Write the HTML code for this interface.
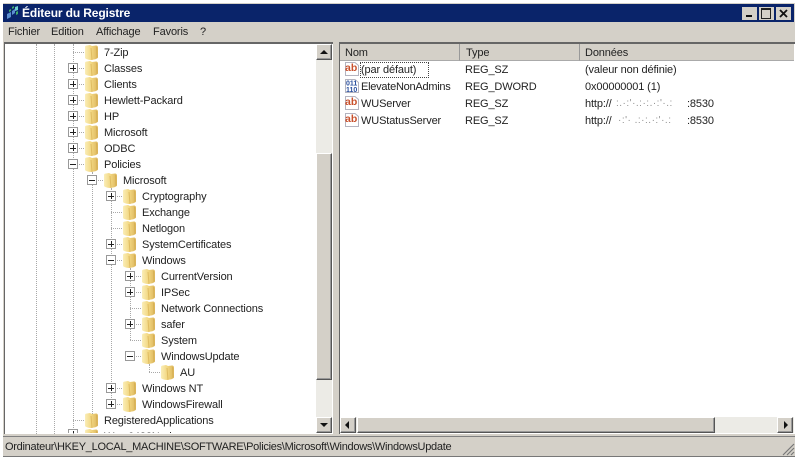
<!DOCTYPE html>
<html lang="fr"><head><meta charset="utf-8"><title>Éditeur du Registre</title>
<style>
html,body{margin:0;padding:0;background:#fff}
#w{position:relative;width:798px;height:461px;overflow:hidden;background:#fff;font:11px/16px "Liberation Sans",sans-serif;color:#222;filter:blur(.35px)}
#w div,#w span.a,#w svg.a{position:absolute}
.t{white-space:nowrap;height:16px;letter-spacing:-.13px}
.r{margin-top:1px}
.f{width:15px;height:17px}
.p{width:8px;height:8px;border:1px solid #999;background:#fff}
.p:before{content:"";position:absolute;left:1px;top:3px;width:6px;height:1px;background:#222;margin-top:.5px}
.p.x:after{content:"";position:absolute;left:3px;top:1px;width:1px;height:6px;background:#222;margin-left:.5px}
.v{width:0;border-left:1px dotted #a8a8a8}
.h{height:0;border-top:1px dotted #a8a8a8}
.b{background:#d4d0c8;box-sizing:border-box;border:1px solid;border-color:#fff #555 #555 #fff;box-shadow:inset -1px -1px 0 #999}
.i{width:16px;height:16px}
</style></head><body><div id="w">
<svg width="0" height="0" style="position:absolute"><defs>
<linearGradient id="g" x1="0" x2="1" y1="0" y2="0"><stop offset="0" stop-color="#faeeb8"/><stop offset=".5" stop-color="#f2d680"/><stop offset="1" stop-color="#dcb65c"/></linearGradient>
<symbol id="fo" viewBox="0 0 15 17"><path d="M1 3 Q1 1.500 3 1.500 L6 1 L8 2 L12 1.500 Q14 1.500 14 4 L14 13.500 Q13 15 10 15.500 L7 16 Q2 15.500 1 14 Z" fill="url(#g)"/><path d="M7 4 L8 16 M12.500 3 L13 14" stroke="#d0a548" stroke-width="1" opacity=".55" fill="none"/></symbol>
<symbol id="ab" viewBox="0 0 16 16"><path d="M1.500 1.500H11L14.500 4.500V14.500H1.500Z" fill="#fff" stroke="#b4b4c0"/><text x="1" y="10" font-family="Liberation Sans" font-size="10.500" font-weight="700" fill="#c8502c">ab</text></symbol>
<symbol id="bi" viewBox="0 0 16 16"><path d="M1.500 1.500H11L14.500 4.500V14.500H1.500Z" fill="#fff" stroke="#b4b4c0"/><text x="2" y="7.500" font-family="Liberation Sans" font-size="7" font-weight="700" fill="#2a4f9e">011</text><text x="2" y="14" font-family="Liberation Sans" font-size="7" font-weight="700" fill="#2a4f9e">110</text></symbol>
</defs></svg>

<!-- window frame -->
<div style="left:3px;top:3px;width:792px;height:453px;background:#d4d0c8;border-bottom:1px solid #777"></div>
<div style="left:3px;top:4px;width:791px;height:18px;background:#0a246a"></div>
<svg class="a" style="left:6px;top:5px" width="14" height="15" viewBox="0 0 14 15"><path d="M1 9l4-2v5l-4 2zM6 6l3-2v4l-3 2z" fill="#5b8fd0"/><path d="M9 2l3-1v4l-3 1z" fill="#6fd0d0"/><path d="M3 5l2-1v2l-2 1zM6 2l2-1v2l-2 1zM10 7l2-1v3l-2 1z" fill="#3fae6a"/></svg>
<div class="t" style="left:22px;top:5px;color:#fff;font-weight:700;font-size:12px">Éditeur du Registre</div>
<div style="left:742px;top:7px;width:15px;height:13px;background:#d4d0c8"><div style="left:4px;top:8px;width:6px;height:2px;background:#111"></div></div>
<div style="left:759px;top:7px;width:15px;height:13px;background:#d4d0c8"><div style="left:2px;top:1px;width:8px;height:8px;border:1px solid #222;border-top-width:2px"></div></div>
<div style="left:776px;top:7px;width:15px;height:13px;background:#d4d0c8"><svg class="a" style="left:3px;top:2px" width="9" height="9"><path d="M1 1L8 8M8 1L1 8" stroke="#111" stroke-width="1.800"/></svg></div>

<!-- menu -->
<div class="t" style="left:8px;top:24px">Fichier</div>
<div class="t" style="left:51px;top:24px">Edition</div>
<div class="t" style="left:96px;top:24px">Affichage</div>
<div class="t" style="left:153px;top:24px">Favoris</div>
<div class="t" style="left:200px;top:24px">?</div>

<!-- tree pane -->
<div style="left:4px;top:42px;width:329px;height:392px;background:#fff;border-top:2px solid #666;border-left:1px solid #666;box-sizing:border-box;overflow:hidden">
<div style="left:0;top:0;width:324px;height:390px;overflow:hidden" id="tree">
<div class="v" style="left:31px;top:0;height:390px"></div>
<div class="v" style="left:49px;top:0;height:390px"></div>
<div class="v" style="left:68px;top:0;height:390px"></div>
<div class="v" style="left:87px;top:128px;height:250px"></div>
<div class="v" style="left:106px;top:144px;height:216px"></div>
<div class="v" style="left:125px;top:224px;height:72px"></div>
<div class="v" style="left:144px;top:320px;height:8px"></div>
</div>
</div>

<!-- tree rows -->
<div class="h" style="left:73px;top:52px;width:11px"></div><svg class="a f" style="left:84px;top:44px"><use href="#fo"/></svg><div class="t r" style="left:104px;top:44px">7-Zip</div>
<div class="h" style="left:73px;top:68px;width:11px"></div><div class="p x" style="left:68px;top:63px"></div><svg class="a f" style="left:84px;top:60px"><use href="#fo"/></svg><div class="t r" style="left:104px;top:60px">Classes</div>
<div class="h" style="left:73px;top:84px;width:11px"></div><div class="p x" style="left:68px;top:79px"></div><svg class="a f" style="left:84px;top:76px"><use href="#fo"/></svg><div class="t r" style="left:104px;top:76px">Clients</div>
<div class="h" style="left:73px;top:100px;width:11px"></div><div class="p x" style="left:68px;top:95px"></div><svg class="a f" style="left:84px;top:92px"><use href="#fo"/></svg><div class="t r" style="left:104px;top:92px">Hewlett-Packard</div>
<div class="h" style="left:73px;top:116px;width:11px"></div><div class="p x" style="left:68px;top:111px"></div><svg class="a f" style="left:84px;top:108px"><use href="#fo"/></svg><div class="t r" style="left:104px;top:108px">HP</div>
<div class="h" style="left:73px;top:132px;width:11px"></div><div class="p x" style="left:68px;top:127px"></div><svg class="a f" style="left:84px;top:124px"><use href="#fo"/></svg><div class="t r" style="left:104px;top:124px">Microsoft</div>
<div class="h" style="left:73px;top:148px;width:11px"></div><div class="p x" style="left:68px;top:143px"></div><svg class="a f" style="left:84px;top:140px"><use href="#fo"/></svg><div class="t r" style="left:104px;top:140px">ODBC</div>
<div class="h" style="left:73px;top:164px;width:11px"></div><div class="p" style="left:68px;top:159px"></div><svg class="a f" style="left:84px;top:156px"><use href="#fo"/></svg><div class="t r" style="left:104px;top:156px">Policies</div>

<div class="h" style="left:92px;top:180px;width:11px"></div><div class="p" style="left:87px;top:175px"></div><svg class="a f" style="left:103px;top:172px"><use href="#fo"/></svg><div class="t r" style="left:123px;top:172px">Microsoft</div>

<div class="h" style="left:111px;top:196px;width:11px"></div><div class="p x" style="left:106px;top:191px"></div><svg class="a f" style="left:122px;top:188px"><use href="#fo"/></svg><div class="t r" style="left:142px;top:188px">Cryptography</div>
<div class="h" style="left:111px;top:212px;width:11px"></div><svg class="a f" style="left:122px;top:204px"><use href="#fo"/></svg><div class="t r" style="left:142px;top:204px">Exchange</div>
<div class="h" style="left:111px;top:228px;width:11px"></div><svg class="a f" style="left:122px;top:220px"><use href="#fo"/></svg><div class="t r" style="left:142px;top:220px">Netlogon</div>
<div class="h" style="left:111px;top:244px;width:11px"></div><div class="p x" style="left:106px;top:239px"></div><svg class="a f" style="left:122px;top:236px"><use href="#fo"/></svg><div class="t r" style="left:142px;top:236px">SystemCertificates</div>
<div class="h" style="left:111px;top:260px;width:11px"></div><div class="p" style="left:106px;top:255px"></div><svg class="a f" style="left:122px;top:252px"><use href="#fo"/></svg><div class="t r" style="left:142px;top:252px">Windows</div>

<div class="h" style="left:130px;top:276px;width:11px"></div><div class="p x" style="left:125px;top:271px"></div><svg class="a f" style="left:141px;top:268px"><use href="#fo"/></svg><div class="t r" style="left:161px;top:268px">CurrentVersion</div>
<div class="h" style="left:130px;top:292px;width:11px"></div><div class="p x" style="left:125px;top:287px"></div><svg class="a f" style="left:141px;top:284px"><use href="#fo"/></svg><div class="t r" style="left:161px;top:284px">IPSec</div>
<div class="h" style="left:130px;top:308px;width:11px"></div><svg class="a f" style="left:141px;top:300px"><use href="#fo"/></svg><div class="t r" style="left:161px;top:300px">Network Connections</div>
<div class="h" style="left:130px;top:324px;width:11px"></div><div class="p x" style="left:125px;top:319px"></div><svg class="a f" style="left:141px;top:316px"><use href="#fo"/></svg><div class="t r" style="left:161px;top:316px">safer</div>
<div class="h" style="left:130px;top:340px;width:11px"></div><svg class="a f" style="left:141px;top:332px"><use href="#fo"/></svg><div class="t r" style="left:161px;top:332px">System</div>
<div class="h" style="left:130px;top:356px;width:11px"></div><div class="p" style="left:125px;top:351px"></div><svg class="a f" style="left:141px;top:348px"><use href="#fo"/></svg><div class="t r" style="left:161px;top:348px">WindowsUpdate</div>
<div class="v" style="left:149px;top:364px;height:8px"></div><div class="h" style="left:149px;top:372px;width:11px"></div><svg class="a f" style="left:160px;top:364px"><use href="#fo"/></svg><div class="t r" style="left:180px;top:364px">AU</div>

<div class="h" style="left:111px;top:388px;width:11px"></div><div class="p x" style="left:106px;top:383px"></div><svg class="a f" style="left:122px;top:380px"><use href="#fo"/></svg><div class="t r" style="left:142px;top:380px">Windows NT</div>
<div class="h" style="left:111px;top:404px;width:11px"></div><div class="p x" style="left:106px;top:399px"></div><svg class="a f" style="left:122px;top:396px"><use href="#fo"/></svg><div class="t r" style="left:142px;top:396px">WindowsFirewall</div>
<div class="h" style="left:73px;top:420px;width:11px"></div><svg class="a f" style="left:84px;top:412px"><use href="#fo"/></svg><div class="t r" style="left:104px;top:412px">RegisteredApplications</div>
<div style="left:60px;top:429px;width:250px;height:4px;overflow:hidden"><div class="p x" style="left:8px;top:0"></div><svg class="a f" style="left:24px;top:-1px"><use href="#fo"/></svg><div class="t" style="left:44px;top:0">Wow6432Node</div></div>

<!-- tree scrollbar -->
<div style="left:316px;top:44px;width:16px;height:389px;background:#ecebe6"></div>
<div class="b" style="left:316px;top:44px;width:16px;height:16px"><div style="left:3px;top:5px;width:0;height:0;border:4px solid transparent;border-top:0;border-bottom:4px solid #111"></div></div>
<div class="b" style="left:316px;top:153px;width:16px;height:227px"></div>
<div class="b" style="left:316px;top:417px;width:16px;height:16px"><div style="left:3px;top:5px;width:0;height:0;border:4px solid transparent;border-bottom:0;border-top:4px solid #111"></div></div>

<!-- list pane -->
<div style="left:339px;top:42px;width:456px;height:392px;background:#fff;border-top:2px solid #666;border-left:1px solid #666;box-sizing:border-box"></div>
<div style="left:340px;top:44px;width:119px;height:16px;background:#d4d0c8;border-right:1px solid #999;border-bottom:1px solid #aaa"></div>
<div style="left:460px;top:44px;width:119px;height:16px;background:#d4d0c8;border-right:1px solid #999;border-bottom:1px solid #aaa"></div>
<div style="left:580px;top:44px;width:214px;height:16px;background:#d4d0c8;border-bottom:1px solid #aaa"></div>
<div class="t" style="left:345px;top:45px">Nom</div>
<div class="t" style="left:466px;top:45px">Type</div>
<div class="t" style="left:585px;top:45px">Données</div>

<svg class="a i" style="left:344px;top:61px"><use href="#ab"/></svg>
<div style="left:360px;top:62px;width:67px;height:14px;border:1px dotted #444"></div>
<div class="t" style="left:361px;top:62px">(par défaut)</div>
<div class="t" style="left:465px;top:62px">REG_SZ</div>
<div class="t" style="left:585px;top:62px">(valeur non définie)</div>

<svg class="a i" style="left:344px;top:78px"><use href="#bi"/></svg>
<div class="t" style="left:361px;top:79px;letter-spacing:-.25px">ElevateNonAdmins</div>
<div class="t" style="left:465px;top:79px">REG_DWORD</div>
<div class="t" style="left:585px;top:79px">0x00000001 (1)</div>

<svg class="a i" style="left:344px;top:95px"><use href="#ab"/></svg>
<div class="t" style="left:361px;top:96px">WUServer</div>
<div class="t" style="left:465px;top:96px">REG_SZ</div>
<div class="t" style="left:585px;top:96px">http://</div>
<div class="t" style="left:616px;top:96px;width:72px;overflow:hidden;opacity:.5;font-size:10px;letter-spacing:.5px">:.·:'·.:·:.·:'·.:</div>
<div class="t" style="left:687px;top:96px">:8530</div>

<svg class="a i" style="left:344px;top:112px"><use href="#ab"/></svg>
<div class="t" style="left:361px;top:113px">WUStatusServer</div>
<div class="t" style="left:465px;top:113px">REG_SZ</div>
<div class="t" style="left:585px;top:113px">http://</div>
<div class="t" style="left:618px;top:113px;width:70px;overflow:hidden;opacity:.5;font-size:10px;letter-spacing:.5px">·:'· .:·:.·:'·.:</div>
<div class="t" style="left:687px;top:113px">:8530</div>

<!-- horizontal scrollbar -->
<div style="left:340px;top:417px;width:454px;height:16px;background:#ecebe6"></div>
<div class="b" style="left:340px;top:417px;width:16px;height:16px"><div style="left:4px;top:3px;width:0;height:0;border:4px solid transparent;border-left:0;border-right:4px solid #111"></div></div>
<div class="b" style="left:357px;top:417px;width:358px;height:16px"></div>
<div class="b" style="left:777px;top:417px;width:16px;height:16px"><div style="left:6px;top:3px;width:0;height:0;border:4px solid transparent;border-right:0;border-left:4px solid #111"></div></div>

<!-- status bar -->
<div style="left:3px;top:436px;width:792px;height:1px;background:#808080"></div>
<div class="t" style="left:5px;top:439px;letter-spacing:-.28px">Ordinateur\HKEY_LOCAL_MACHINE\SOFTWARE\Policies\Microsoft\Windows\WindowsUpdate</div>
<svg class="a" style="left:781px;top:443px" width="14" height="13"><path d="M2 12L13 1M6 12L13 5M10 12L13 9" stroke="#777" stroke-width="1.200"/></svg>
</div></body></html>
